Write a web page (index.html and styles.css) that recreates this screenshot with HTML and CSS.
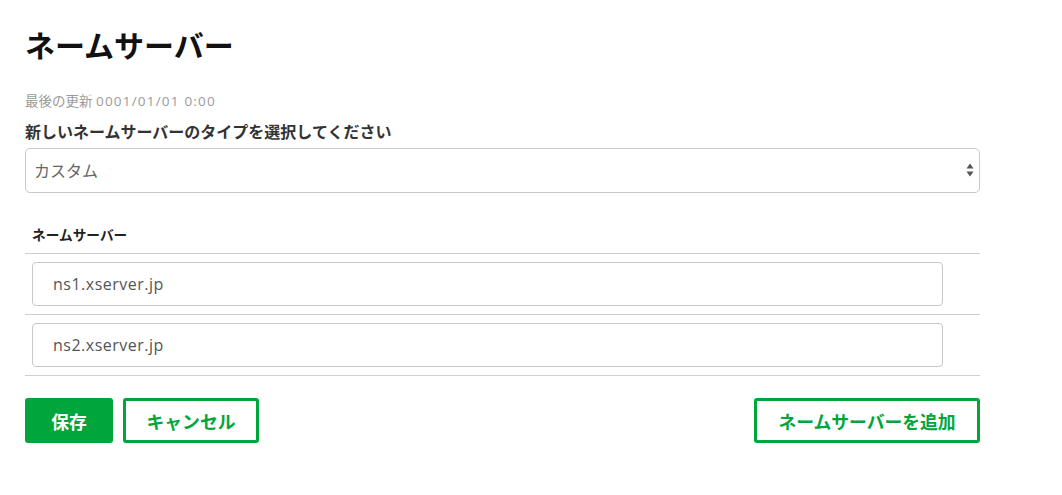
FILE: index.html
```html
<!DOCTYPE html>
<html lang="ja">
<head>
<meta charset="utf-8">
<link rel="stylesheet" href="styles.css">
</head>
<body>
<main class="page">
  <h1 class="title">ネームサーバー</h1>
  <p class="updated">最後の更新 <span class="timestamp">0001/01/01 0:00</span></p>
  <label class="field-label" for="ns-type">新しいネームサーバーのタイプを選択してください</label>
  <div class="select-wrap">
    <select id="ns-type" class="select">
      <option>カスタム</option>
    </select>
    <svg class="select-arrows" width="8" height="14" viewBox="0 0 8 14">
      <path d="M4 0.5 L7.5 5.5 L0.5 5.5 Z" fill="#555"/>
      <path d="M4 13.5 L7.5 8.5 L0.5 8.5 Z" fill="#555"/>
    </svg>
  </div>

  <table class="ns-table">
    <thead>
      <tr><th>ネームサーバー</th></tr>
    </thead>
    <tbody>
      <tr><td><input class="text-input" type="text" value="ns1.xserver.jp"></td></tr>
      <tr><td><input class="text-input" type="text" value="ns2.xserver.jp"></td></tr>
    </tbody>
  </table>

  <div class="actions">
    <div class="actions-left">
      <button class="btn btn-primary">保存</button>
      <button class="btn btn-outline btn-cancel">キャンセル</button>
    </div>
    <button class="btn btn-outline btn-add">ネームサーバーを追加</button>
  </div>
</main>
</body>
</html>
```

FILE: styles.css
```css
* { box-sizing: border-box; }

body {
  margin: 0;
  background: #fff;
  font-family: "Open Sans", "Noto Sans CJK JP", sans-serif;
  color: #222;
}

.page {
  width: 955px;
  margin-left: 25px;
  padding-top: 25px;
}

.title {
  margin: 0;
  font-size: 30px;
  line-height: 42px;
  font-weight: 700;
  color: #111;
}

.updated {
  margin: 25px 0 0;
  font-size: 13.5px;
  line-height: 18px;
  font-weight: 400;
  color: #9a9a9a;
}

.timestamp {
  letter-spacing: 1.2px;
}

.field-label {
  display: block;
  margin-top: 11px;
  font-size: 16px;
  line-height: 22px;
  font-weight: 700;
  color: #333;
}

.select-wrap {
  position: relative;
  margin-top: 5px;
}

.select {
  display: block;
  width: 100%;
  height: 45px;
  padding: 0 8px;
  border: 1px solid #c8c8c8;
  border-radius: 5px;
  background: #fff;
  font-family: inherit;
  font-size: 16px;
  color: #666;
  appearance: none;
  -webkit-appearance: none;
}

.select-arrows {
  position: absolute;
  right: 6px;
  top: 15px;
  pointer-events: none;
}

.ns-table {
  width: 100%;
  margin-top: 24px;
  border-collapse: collapse;
}

.ns-table th {
  text-align: left;
  padding: 8px 7px;
  font-size: 13.7px;
  line-height: 20px;
  font-weight: 700;
  color: #222;
  border-bottom: 1px solid #cfcfcf;
}

.ns-table td {
  padding: 8px 37px 8px 7px;
  border-bottom: 1px solid #cfcfcf;
}

.text-input {
  display: block;
  width: 100%;
  height: 44px;
  padding: 0 20px;
  border: 1px solid #c8c8c8;
  border-radius: 4px;
  font-family: inherit;
  font-size: 16px;
  letter-spacing: 0.5px;
  color: #555;
  background: #fff;
}

.actions {
  display: flex;
  justify-content: space-between;
  margin-top: 22px;
}

.actions-left {
  display: flex;
  gap: 10px;
}

.btn {
  height: 45px;
  border-radius: 3px;
  font-family: inherit;
  font-size: 17.8px;
  font-weight: 700;
  cursor: pointer;
}

.btn-primary {
  width: 88px;
  background: #00a63c;
  border: none;
  color: #fff;
}

.btn-outline {
  background: #fff;
  border: 3px solid #00a63c;
  color: #00a63c;
}

.btn-cancel { width: 136px; }
.btn-add { width: 226px; }
```
